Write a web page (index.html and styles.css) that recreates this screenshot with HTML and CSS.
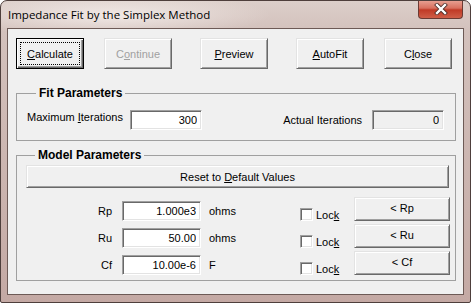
FILE: index.html
```html
<!DOCTYPE html>
<html lang="en">
<head>
    <meta charset="UTF-8">
    <meta name="viewport" content="width=device-width, initial-scale=1.0">
    <title>Impedance Fit by the Simplex Method</title>
    <link rel="stylesheet" href="styles.css">
</head>

<body>
    <div class="window">
        <div class="titlebar">
            <span class="title">Impedance Fit by the Simplex Method</span>
            <div class="close-x">
                <svg width="18" height="12" viewBox="0 0 18 12">
                    <path d="M5 2 L13 10 M13 2 L5 10" stroke="#4a2a26" stroke-width="4" stroke-linecap="square"/>
                    <path d="M5 2 L13 10 M13 2 L5 10" stroke="#ffffff" stroke-width="2.4" stroke-linecap="square"/>
                </svg>
            </div>
        </div>

        <div class="client">
            <div class="actions">
                <button class="btn action default"><span class="focus"><u>C</u>alculate</span></button>
                <button class="btn action" disabled>C<u>o</u>ntinue</button>
                <button class="btn action"><u>P</u>review</button>
                <button class="btn action"><u>A</u>utoFit</button>
                <button class="btn action">C<u>l</u>ose</button>
            </div>

            <fieldset class="group fit">
                <legend>Fit Parameters</legend>
                <div class="fit-row">
                    <label class="fit-label max">Maximum <u>I</u>terations</label>
                    <input class="field" type="text" value="300">
                    <label class="fit-label actual">Actual Iterations</label>
                    <input class="field readonly" type="text" value="0" readonly>
                </div>
            </fieldset>

            <fieldset class="group model">
                <legend>Model Parameters</legend>
                <button class="btn reset">Reset to <u>D</u>efault Values</button>

                <div class="param-row">
                    <span class="param-name">Rp</span>
                    <input class="field param" type="text" value="1.000e3">
                    <span class="param-unit">ohms</span>
                    <label class="lock"><span class="check"></span>Loc<u>k</u></label>
                    <button class="btn set">&lt; Rp</button>
                </div>
                <div class="param-row">
                    <span class="param-name">Ru</span>
                    <input class="field param" type="text" value="50.00">
                    <span class="param-unit">ohms</span>
                    <label class="lock"><span class="check"></span>Loc<u>k</u></label>
                    <button class="btn set">&lt; Ru</button>
                </div>
                <div class="param-row last">
                    <span class="param-name">Cf</span>
                    <input class="field param" type="text" value="10.00e-6">
                    <span class="param-unit">F</span>
                    <label class="lock"><span class="check"></span>Loc<u>k</u></label>
                    <button class="btn set">&lt; Cf</button>
                </div>
            </fieldset>
        </div>
    </div>
</body>
</html>
```

FILE: styles.css
```css
body {
  margin: 0;
  font-family: "Liberation Sans", Arial, sans-serif;
  font-size: 11px;
  color: #000;
  background: #fff;
}

.window {
  width: 471px;
  height: 303px;
  box-sizing: border-box;
  border: 1px solid #4e3f3c;
  border-radius: 7px 7px 2px 2px;
  background:
    radial-gradient(ellipse 160px 22px at 110px 14px, rgba(245, 238, 235, 0.85), rgba(245, 238, 235, 0) 100%),
    linear-gradient(to bottom, #dccfca 0px, #d3c1bc 30px, #c4a9a4 100%);
  display: flex;
  flex-direction: column;
  overflow: hidden;
}

.titlebar {
  height: 27px;
  display: flex;
  align-items: flex-start;
  justify-content: space-between;
  padding-left: 7px;
}

.title {
  font-family: "Open Sans", "Liberation Sans", sans-serif;
  font-size: 11.5px;
  line-height: 14px;
  margin-top: 7px;
  color: #000;
}

.close-x {
  width: 43px;
  height: 18px;
  margin-right: 7px;
  margin-top: -1px;
  border: 1px solid #6b3a33;
  border-top: none;
  border-radius: 0 0 4px 4px;
  background: linear-gradient(to bottom, #e9a597 0%, #d8705f 45%, #c03a26 55%, #cf5e48 100%);
  display: flex;
  align-items: center;
  justify-content: center;
}

.client {
  flex: 1;
  margin: 0 6px 7px 6px;
  border: 1px solid #6d5a56;
  background: #f0f0f0;
  display: flex;
  flex-direction: column;
}

/* buttons */
.btn {
  font-family: inherit;
  font-size: 11px;
  color: #000;
  background: #f0f0f0;
  border: 1px solid;
  border-color: #e3e3e3 #696969 #696969 #e3e3e3;
  box-shadow: inset 1px 1px #ffffff, inset -1px -1px #a0a0a0;
  padding: 0;
  margin: 0;
}

.btn:disabled {
  color: #a0a0a0;
}

.actions {
  display: flex;
  padding: 9px 10px 0 8px;
}

.action {
  width: 68px;
  height: 31px;
  margin-right: 28px;
}

.action:nth-child(1),
.action:nth-child(4) {
  margin-right: 20px;
}

.action:last-child {
  margin-right: 0;
}

.action.default {
  border: 1px solid #000;
  box-shadow: inset 1px 1px #ffffff, inset -1px -1px #696969, inset -2px -2px #a0a0a0;
  padding: 3px;
}

.focus {
  display: flex;
  align-items: center;
  justify-content: center;
  height: 100%;
  box-sizing: border-box;
  border: 1px dotted #000;
}

/* groups */
.group {
  margin: 0 7px 0 8px;
  border: 1px solid #a0a0a0;
  min-width: 0;
}

.group legend {
  font-size: 12px;
  font-weight: bold;
  line-height: 14px;
  padding: 0 3px;
  margin-left: 9px;
}

.fit {
  margin-top: 17px;
  padding: 10px 11px 10px 10px;
}

.fit-row {
  display: flex;
  align-items: center;
}

.fit-label.max {
  width: 103px;
  margin-top: -6px;
}

.fit-label.actual {
  margin-left: auto;
  margin-right: 10px;
}

.field {
  width: 72px;
  height: 20px;
  box-sizing: border-box;
  font-family: inherit;
  font-size: 11px;
  text-align: right;
  padding: 0 4px 0 0;
  margin: 0;
  background: #fff;
  border: 1px solid;
  border-color: #a0a0a0 #ffffff #ffffff #a0a0a0;
  box-shadow: inset 1px 1px #696969, inset -1px -1px #e3e3e3;
  outline: none;
}

.field.readonly {
  background: #f0f0f0;
}

.model {
  margin-top: 7px;
  padding: 3px 4px 5px 9px;
}

.reset {
  display: block;
  width: 423px;
  height: 23px;
  margin-bottom: 9px;
}

.param-row {
  display: flex;
  align-items: flex-start;
  height: 27px;
}

.param-row.last {
  height: 24px;
}

.param-name {
  width: 86px;
  text-align: right;
  margin-top: 8px;
}

.field.param {
  width: 79px;
  margin: 4px 0 0 10px;
}

.param-unit {
  width: 91px;
  margin: 8px 0 0 8px;
}

.lock {
  width: 54px;
  display: flex;
  align-items: flex-end;
  margin-top: 11px;
}

.check {
  width: 13px;
  height: 13px;
  box-sizing: border-box;
  margin-right: 3px;
  background: #fff;
  border: 1px solid;
  border-color: #a0a0a0 #ffffff #ffffff #a0a0a0;
  box-shadow: inset 1px 1px #696969, inset -1px -1px #e3e3e3;
}

.set {
  width: 96px;
  height: 24px;
  padding-bottom: 3px;
}
```
